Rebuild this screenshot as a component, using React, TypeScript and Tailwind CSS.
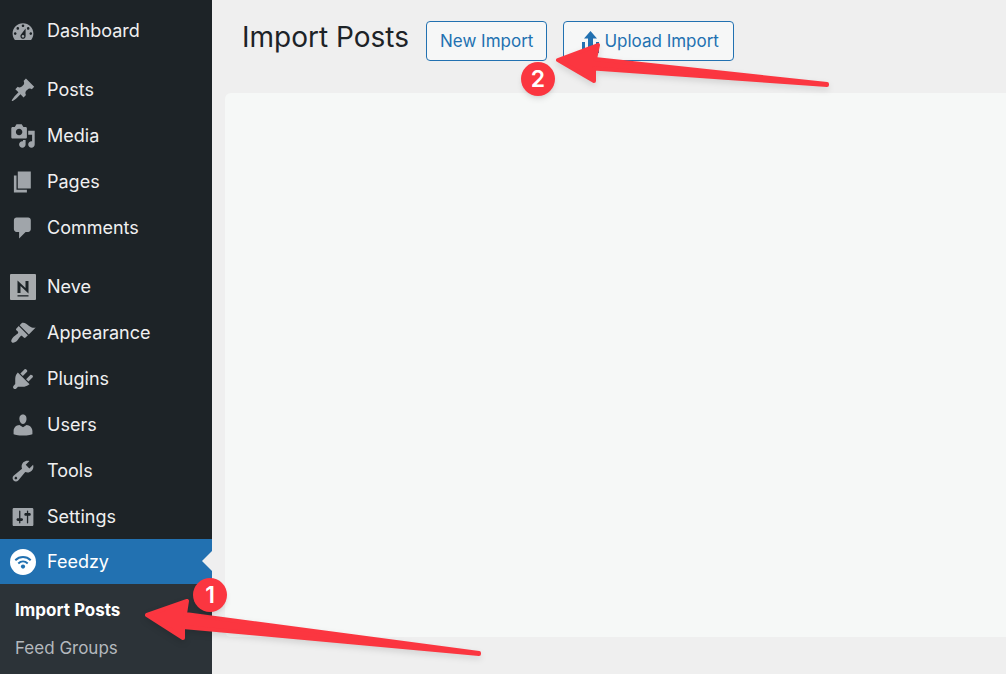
import React from 'react';

const groups: { name: string; d: string }[][] = [
  [
    {
      name: 'Dashboard',
      d: 'M3.76 17h12.48c1.1-1.37 1.76-3.11 1.76-5 0-4.42-3.58-8-8-8s-8 3.58-8 8c0 1.89.66 3.63 1.76 5zM10 5c.55 0 1 .45 1 1s-.45 1-1 1-1-.45-1-1 .45-1 1-1zM6 7c.55 0 1 .45 1 1s-.45 1-1 1-1-.45-1-1 .45-1 1-1zm8 0c.55 0 1 .45 1 1s-.45 1-1 1-1-.45-1-1 .45-1 1-1zm-5.37 5.55L12 8v6c0 1.1-.9 2-2 2s-2-.9-2-2c0-.57.24-1.08.63-1.45zM4 11c.55 0 1 .45 1 1s-.45 1-1 1-1-.45-1-1 .45-1 1-1zm12 0c.55 0 1 .45 1 1s-.45 1-1 1-1-.45-1-1 .45-1 1-1zm-5 3c0-.55-.45-1-1-1s-1 .45-1 1 .45 1 1 1 1-.45 1-1z',
    },
  ],
  [
    {
      name: 'Posts',
      d: 'M10.44 3.02l1.82-1.82 6.36 6.35-1.83 1.82c-1.05-.68-2.48-.57-3.41.36l-.75.75c-.92.93-1.04 2.35-.35 3.41l-1.83 1.82-2.41-2.41-2.8 2.79c-.42.42-3.38 2.71-3.8 2.29s1.86-3.39 2.28-3.81l2.79-2.79L4.1 9.36l1.83-1.82c1.05.69 2.48.57 3.4-.36l.75-.75c.93-.92 1.05-2.35.36-3.41z',
    },
    {
      name: 'Media',
      d: 'M13 11V4c0-.55-.45-1-1-1h-1.67L9 1H5L3.67 3H2c-.55 0-1 .45-1 1v7c0 .55.45 1 1 1h10c.55 0 1-.45 1-1zM7 4.5c1.38 0 2.5 1.12 2.5 2.5S8.38 9.5 7 9.5 4.5 8.38 4.5 7 5.62 4.5 7 4.5zM14 6h5v10.5c0 1.38-1.12 2.5-2.5 2.5S14 17.88 14 16.5s1.12-2.5 2.5-2.5c.17 0 .34.02.5.05V9h-3V6zm-4 8.05V13h2v3.5c0 1.38-1.12 2.5-2.5 2.5S7 17.88 7 16.5 8.12 14 9.5 14c.17 0 .34.02.5.05z',
    },
    { name: 'Pages', d: 'M6 15V2h10v13H6zm-1 1h8v2H3V5h2v11z' },
    {
      name: 'Comments',
      d: 'M5 2h9c1.1 0 2 .9 2 2v7c0 1.1-.9 2-2 2h-2l-5 5v-5H5c-1.1 0-2-.9-2-2V4c0-1.1.9-2 2-2z',
    },
  ],
  [
    { name: 'Neve', d: '' },
    {
      name: 'Appearance',
      d: 'M14.48 11.06L7.41 3.99l1.5-1.5c.5-.56 2.3-.47 3.51.32 1.21.8 1.43 1.28 2.91 2.1 1.18.64 2.45 1.26 4.45.85zm-.71.71L6.7 4.7 4.93 6.47c-.39.39-.39 1.02 0 1.41l1.06 1.06c.39.39.39 1.03 0 1.42-.6.6-1.43 1.11-2.21 1.69-.35.26-.7.53-1.01.84C1.43 14.23.4 16.08 1.4 17.07c.99 1 2.84-.03 4.18-1.36.31-.31.58-.66.85-1.02.57-.78 1.08-1.61 1.69-2.21.39-.39 1.02-.39 1.41 0l1.06 1.06c.39.39 1.02.39 1.41 0z',
    },
    {
      name: 'Plugins',
      d: 'M13.11 4.36L9.87 7.6 8 5.73l3.24-3.24c.35-.34 1.05-.2 1.56.32.52.51.66 1.21.31 1.55zm-8 1.77l.91-1.12 9.01 9.01-1.19.84c-.71.71-2.63 1.16-3.82 1.16H6.14L4.9 17.26c-.59.59-1.54.59-2.12 0-.59-.58-.59-1.53 0-2.12l1.24-1.24v-3.88c0-1.13.4-3.19 1.09-3.89zm7.26 3.97l3.24-3.24c.34-.35 1.04-.21 1.55.31.52.51.66 1.21.31 1.55l-3.24 3.25z',
    },
    {
      name: 'Users',
      d: 'M10 9.25c-2.27 0-2.73-3.44-2.73-3.44C7 4.02 7.82 2 9.97 2c2.16 0 2.98 2.02 2.71 3.81 0 0-.41 3.44-2.68 3.44zm0 2.57L12.72 10c2.39 0 4.52 2.33 4.52 4.53v2.49s-3.65 1.13-7.24 1.13c-3.65 0-7.24-1.13-7.24-1.13v-2.49c0-2.25 1.94-4.48 4.47-4.48z',
    },
    {
      name: 'Tools',
      d: 'M16.68 9.77c-1.34 1.34-3.3 1.67-4.95.99l-5.41 6.52c-.99.99-2.59.99-3.58 0s-.99-2.59 0-3.57l6.52-5.42c-.68-1.65-.35-3.61.99-4.95 1.28-1.28 3.12-1.62 4.72-1.06l-2.89 2.89 2.82 2.82 2.86-2.87c.53 1.58.18 3.39-1.08 4.65zM3.81 16.21c.4.39 1.04.39 1.43 0 .4-.4.4-1.04 0-1.43-.39-.4-1.03-.4-1.43 0-.39.39-.39 1.03 0 1.43z',
    },
    {
      name: 'Settings',
      d: 'M18 16V4c0-.55-.45-1-1-1H3c-.55 0-1 .45-1 1v12c0 .55.45 1 1 1h14c.55 0 1-.45 1-1zM8 11h1c.55 0 1 .45 1 1s-.45 1-1 1H8v1.5c0 .28-.22.5-.5.5s-.5-.22-.5-.5V13H6c-.55 0-1-.45-1-1s.45-1 1-1h1V5.5c0-.28.22-.5.5-.5s.5.22.5.5V11zm5-2h-1c-.55 0-1-.45-1-1s.45-1 1-1h1V5.5c0-.28.22-.5.5-.5s.5.22.5.5V7h1c.55 0 1 .45 1 1s-.45 1-1 1h-1v5.5c0 .28-.22.5-.5.5s-.5-.22-.5-.5V9z',
    },
  ],
];

function MenuIcon({ d }: { d: string }) {
  return (
    <svg viewBox="0 0 20 20" className="w-[26px] h-[26px] shrink-0 fill-[#a0a5aa]" fillRule="evenodd" aria-hidden="true">
      <path d={d} />
    </svg>
  );
}

function NeveIcon() {
  return (
    <svg viewBox="0 0 26 26" className="w-[26px] h-[26px] shrink-0" aria-hidden="true">
      <rect width="26" height="26" rx="1" fill="#a7aaad" />
      <path d="M7.5 19V6.5l8 7.5V7h3v12.5l-8-7.5V19z" fill="#1d2327" />
      <path d="M7.5 21.2h11v1.3h-11z" fill="#1d2327" />
    </svg>
  );
}

function FeedzyIcon() {
  return (
    <svg viewBox="0 0 26 26" className="w-[26px] h-[26px] shrink-0" fill="none" aria-hidden="true">
      <circle cx="13" cy="13" r="13" fill="#fff" />
      <g stroke="#2271b1" strokeWidth="2">
        <path d="M5.3 11.2C9.7 7 16.3 7 20.7 11.2" />
        <path d="M8.3 14.4c2.8-2.5 6.6-2.5 9.4 0" />
      </g>
      <circle cx="13" cy="17.6" r="2.1" fill="#2271b1" />
    </svg>
  );
}

function Arrow({ d, className }: { d: string; className: string }) {
  return (
    <svg
      viewBox="0 0 340 60"
      className={`absolute z-10 w-[340px] h-[60px] pointer-events-none drop-shadow-md ${className}`}
      fill="#fb3640"
      stroke="#fb3640"
      strokeWidth="4"
      strokeLinejoin="round"
      aria-hidden="true"
    >
      <path d={d} />
    </svg>
  );
}

function Badge({ n, className }: { n: number; className: string }) {
  return (
    <span
      className={`absolute z-20 flex items-center justify-center w-[34px] h-[34px] rounded-full bg-[#fb3640] text-white text-[23px] leading-none font-semibold shadow-md ${className}`}
    >
      {n}
    </span>
  );
}

export default function App() {
  return (
    <div className="relative flex min-h-screen overflow-hidden bg-[#efefef] font-['Inter','Liberation_Sans',sans-serif]">
      <nav className="w-[212px] shrink-0 bg-[#1d2327] pt-2 flex flex-col text-[18px] leading-6 text-[#f0f0f1]">
        <div className="flex flex-col gap-[14px]">
          {groups.map((items, i) => (
            <ul key={i} className="flex flex-col gap-px">
              {items.map(item => (
                <li key={item.name}>
                  <a href="#" className="flex items-center gap-[11px] h-[45px] pl-[10px]">
                    {item.name === 'Neve' ? <NeveIcon /> : <MenuIcon d={item.d} />}
                    {item.name}
                  </a>
                </li>
              ))}
            </ul>
          ))}
        </div>
        <a href="#" className="relative flex items-center gap-[11px] h-[45px] pl-[10px] bg-[#2271b1] text-white">
          <FeedzyIcon />
          Feedzy
          <span className="absolute right-0 top-3 border-y-10 border-r-10 border-y-transparent border-r-[#efefef]" />
        </a>
        <ul className="grow bg-[#2c3338] pt-[7px] text-[17px] text-[#b4b9be]">
          <li>
            <a href="#" className="flex items-center h-[38px] pl-[15px] font-bold text-white">Import Posts</a>
          </li>
          <li>
            <a href="#" className="flex items-center h-[38px] pl-[15px]">Feed Groups</a>
          </li>
        </ul>
      </nav>

      <main className="flex-1 flex flex-col pl-[13px] pb-[37px]">
        <header className="flex items-start pl-[17px] pt-[21px] pb-8">
          <h1 className="text-[28px] leading-8 text-[#1d2327] whitespace-nowrap">Import Posts</h1>
          <button className="ml-[17px] h-10 px-[13px] pt-[2px] rounded-[4px] border border-[#2271b1] bg-[#f6f7f7] text-[17px] text-[#2271b1] whitespace-nowrap">
            New Import
          </button>
          <button className="ml-4 h-10 px-[14px] pt-[2px] flex items-center rounded-[4px] border border-[#2271b1] bg-[#f6f7f7] text-[17px] text-[#2271b1] whitespace-nowrap">
            <svg viewBox="0 0 26 26" className="w-[26px] h-[26px]" fill="#2271b1" aria-hidden="true">
              <path d="M12.5 2 19 9.5h-4V19h-5V9.5H6zM4 13h3v8h11v-8h3v11H4z" />
            </svg>
            Upload Import
          </button>
        </header>
        <section className="flex-1 rounded-l-md bg-[#f6f8f7]" />
      </main>

      <Arrow d="M4 21 44 6 41 20 273 45v1L40 29.5V42z" className="left-[554px] top-[39px]" />
      <Badge n={2} className="left-[521px] top-[62px]" />
      <Arrow d="M4 17 44 3 42 16 336 55v1L40 29V40z" className="left-[143px] top-[598px]" />
      <Badge n={1} className="left-[193px] top-[578px]" />
    </div>
  );
}
